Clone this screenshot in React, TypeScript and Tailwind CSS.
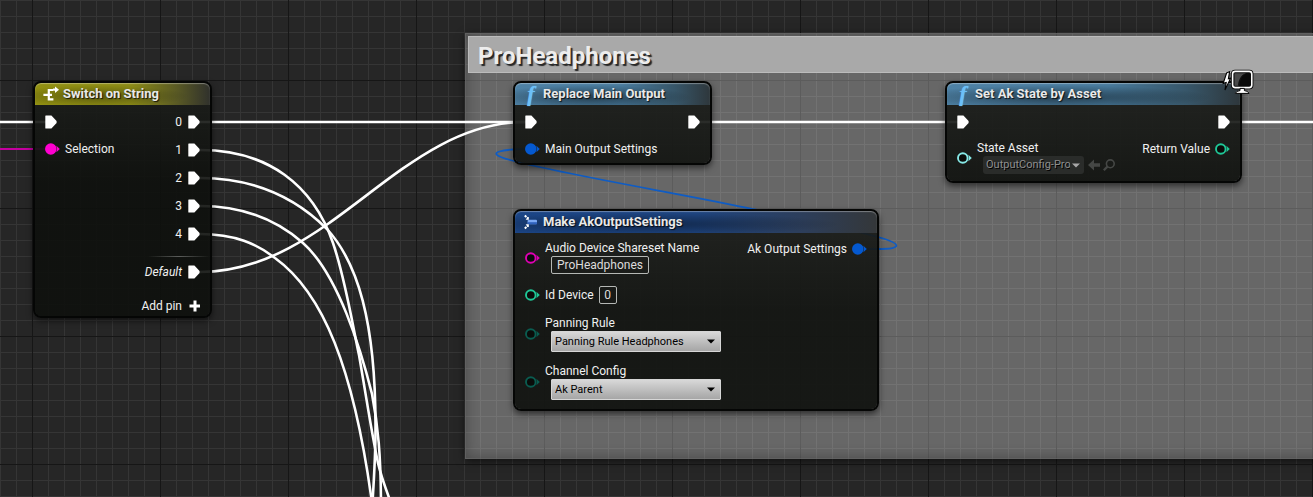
import React from "react";

const WHITE_WIRES = [
  "M-4 122 H50",
  "M200 122 H530",
  "M200 272 C330 272 400 122 525 122",
  "M200 150 C268 150 313 185 333 243 C345 278 352 322 359 355 C366 395 371 430 378 463 C381 476 385 487 391 503",
  "M200 178 C260 178 300 202 327 229 C357 262 376 320 375.5 430 C375.5 455 374 480 372 510",
  "M200 206 C244 206 277 220 303 243 C338 274 361 350 372 394 C378 425 381 455 381 510",
  "M200 234 C235 234 257 244 275 258 C322 292 354 365 373 510",
  "M694 122 H962",
  "M1224 122 H4000",
];

function Wires() {
  return (
    <svg className="pointer-events-none absolute inset-0 h-full w-full" fill="none" aria-hidden="true">
      <path d="M-4 149 H50" stroke="#c4009f" strokeWidth="2" />
      <path
        d="M531 149 C505 149 480 152 510 160 C560 174 700 197 752 209 C810 221 850 229 878 237 C903 244 902 249 878 249 H858"
        stroke="#0f5cc4"
        strokeWidth="1.8"
      />
      {WHITE_WIRES.map((d) => (
        <path key={d} d={d} stroke="#ffffff" strokeWidth="2.6" />
      ))}
    </svg>
  );
}

function ExecPin() {
  return (
    <svg width="12" height="14" viewBox="0 0 12 14" className="shrink-0" aria-hidden="true">
      <path d="M0.8 0.5 H6.4 L11.6 6 V8 L6.4 13.5 H0.8 Q0.3 13.5 0.3 13 V1 Q0.3 0.5 0.8 0.5Z" fill="#fff" />
    </svg>
  );
}

function DataPin({ color, filled = false }: { color: string; filled?: boolean }) {
  return (
    <svg width="15" height="12" viewBox="0 0 15 12" className="shrink-0" aria-hidden="true">
      <circle cx="5.8" cy="6" r="4.8" fill={filled ? color : "#0a0c0a"} stroke={color} strokeWidth="1.9" />
      <path d="M11.4 2.8 L14.8 6 L11.4 9.2 Q12.4 6 11.4 2.8Z" fill={color} />
    </svg>
  );
}

function FunctionIcon() {
  return (
    <span
      className="flex w-4 justify-center font-['Liberation_Serif',serif] text-[22px] leading-5 font-bold text-[#6cc0f8] italic [text-shadow:0_0_1px_#6cc0f8]"
      aria-hidden="true"
    >
      f
    </span>
  );
}

function SwitchIcon() {
  return (
    <svg width="16" height="16" viewBox="0 0 16 16" fill="none" stroke="#fff" strokeWidth="2.2" aria-hidden="true">
      <path d="M10 4 H5.8 V13.4 H10.4 M0.4 8.8 H9" />
      <path d="M10 3.6 H13" />
      <path d="M12 0.4 L16 3.7 L12 7Z" fill="#fff" stroke="none" />
    </svg>
  );
}

function MakeIcon() {
  return (
    <svg width="16" height="16" viewBox="0 0 16 16" aria-hidden="true">
      <rect x="4.6" y="5.8" width="9.4" height="4.4" rx="1" fill="#7aa8f4" />
      <rect x="4.6" y="8.2" width="9.4" height="2" fill="#2f62bd" />
      <path d="M1.8 1.4 L5 4.4 M1.8 14.6 L5 11.6" stroke="#fff" strokeWidth="2" strokeDasharray="2.2 0.8" />
      <path d="M2.6 5.8 H5.8 V2.8Z M2.6 10.2 H5.8 V13.2Z" fill="#fff" />
    </svg>
  );
}

function ClientBadge() {
  return (
    <svg width="32" height="28" viewBox="0 0 32 28" className="absolute -top-[14px] -right-[14px]" role="img" aria-label="Client only">
      <path d="M4.6 4 L7.6 2.6 L6.4 9.8 L8.6 9.2 L3 21 L4.2 13.6 L1.2 14.4Z" fill="#fff" stroke="#000" strokeWidth="1.1" />
      <rect x="9" y="0.8" width="22.4" height="19.4" rx="4" fill="#000" />
      <rect x="10.6" y="2.4" width="19.2" height="16.2" rx="2.6" fill="#0a0a0a" stroke="#fff" strokeWidth="1.6" />
      <path d="M12.5 4.3 H24 C19 6.5 17.6 11 17 16.8 H12.5Z" fill="#4a4a4a" />
      <path d="M24 4.3 C19.5 7 18 12 17.4 16.8 H16 C16.6 11 18.5 6 24 4.3Z" fill="#111" />
      <path d="M18 19.4 H22.4 V21.6 Q26 21.8 27 24.4 H13.4 Q14.4 21.8 18 21.6Z" fill="#fff" stroke="#000" strokeWidth="1" />
    </svg>
  );
}

const HEADER_TINTS = {
  olive:
    "bg-[radial-gradient(ellipse_at_35%_60%,rgba(0,0,0,0.36),transparent_58%),linear-gradient(to_right,#929011_0%,#8b8a16_55%,#5c5c24_80%,#30312c_100%)]",
  steel:
    "bg-[radial-gradient(ellipse_at_38%_65%,rgba(0,0,0,0.5),transparent_60%),linear-gradient(to_right,#4e82a6_0%,#487a9c_55%,#375669_82%,#2e373c_100%)]",
  navy:
    "bg-[radial-gradient(ellipse_at_35%_60%,rgba(0,0,0,0.42),transparent_60%),linear-gradient(to_right,#1b4586_0%,#1e447f_50%,#2d3e5a_80%,#343739_100%)]",
};

function Node({
  title,
  tint,
  icon,
  className,
  badge,
  children,
}: {
  title: string;
  tint: keyof typeof HEADER_TINTS;
  icon: React.ReactNode;
  className: string;
  badge?: React.ReactNode;
  children: React.ReactNode;
}) {
  return (
    <section
      className={`absolute rounded-lg border-2 border-[#050605] bg-[linear-gradient(to_bottom,rgba(28,30,27,0.92),rgba(14,16,13,0.91)_100px)] bg-clip-padding shadow-[0_3px_6px_rgba(0,0,0,0.55)] ${className}`}
    >
      <header
        className={`flex h-[22px] items-center gap-1 rounded-t-md pl-2 shadow-[inset_0_1px_1px_rgba(255,255,255,0.35)] ${HEADER_TINTS[tint]}`}
      >
        {icon}
        <h2 className="text-[13px] leading-4 font-bold whitespace-nowrap text-[#e9e9e9] [text-shadow:1px_1px_1px_rgba(0,0,0,0.8)]">{title}</h2>
      </header>
      {badge}
      {children}
    </section>
  );
}

function Exec({ out = false }: { out?: boolean }) {
  return (
    <div className={`flex h-[27px] items-center ${out ? "justify-end" : ""}`}>
      <ExecPin />
    </div>
  );
}

function ExecOut({ label, italic = false }: { label: string; italic?: boolean }) {
  return (
    <div className={`flex h-7 items-center justify-end gap-[6px] ${italic ? "italic" : ""}`}>
      {label}
      <ExecPin />
    </div>
  );
}

function LabeledPin({ color, label, id, children }: { color: string; label: string; id: string; children: React.ReactNode }) {
  return (
    <div className="flex items-center gap-[5px]">
      <DataPin color={color} />
      <div>
        <label htmlFor={id} className="block leading-[15px] whitespace-nowrap">
          {label}
        </label>
        <div className="flex pl-[6px]">{children}</div>
      </div>
    </div>
  );
}

function EnumSelect({ id, options }: { id: string; options: string[] }) {
  return (
    <div className="relative">
      <select
        id={id}
        className="block h-[21px] w-[170px] appearance-none rounded-[1px] border border-[#d6d6d6] bg-linear-to-b from-[#d8d8d8] to-[#a6a6a6] pl-[3px] text-[11px] leading-4 text-black"
      >
        {options.map((o) => (
          <option key={o}>{o}</option>
        ))}
      </select>
      <svg width="8" height="5" viewBox="0 0 8 5" className="pointer-events-none absolute top-2 right-[6px]" aria-hidden="true">
        <path d="M0 0.5 H8 L4 4.5Z" fill="#000" />
      </svg>
    </div>
  );
}

const fieldClass =
  "h-[18px] rounded-[2px] border border-[#b5b8b5] bg-transparent text-[12px] leading-4 text-[#dcdcdc]";

export default function App() {
  return (
    <main className="relative min-h-screen w-full overflow-hidden bg-[#262626] bg-[linear-gradient(to_right,#161616_1px,transparent_1px),linear-gradient(to_bottom,#161616_1px,transparent_1px),linear-gradient(to_right,#353535_1px,transparent_1px),linear-gradient(to_bottom,#353535_1px,transparent_1px)] bg-[length:128px_128px,128px_128px,16px_16px,16px_16px] bg-[position:32px_80px,32px_80px,0_0,0_0] font-['Roboto',sans-serif] text-[12px] leading-4 text-[#f0f0f0]">
      <section className="absolute top-[33px] -right-5 left-[465px] h-[426px] border border-[#5c5c5c]/60 bg-white/30 p-[2px] shadow-[inset_0_0_14px_rgba(0,0,0,0.3),0_2px_8px_rgba(0,0,0,0.6)]">
        <h1 className="border border-[#bcbcbc] bg-[#a9a9a9] pt-[3px] pl-[9px] text-[24px] leading-8 font-bold text-[#ededed] [text-shadow:2px_2px_1px_#262626]">
          ProHeadphones
        </h1>
      </section>

      <Wires />

      <Node title="Switch on String" tint="olive" icon={<SwitchIcon />} className="top-[81px] left-[33px] w-[179px]">
        <div className="flex justify-between px-2.5 pt-[3px]">
          <div>
            <Exec />
            <div className="flex h-[27px] items-center gap-[5px]">
              <DataPin color="#ff00d0" filled />
              Selection
            </div>
          </div>
          <div>
            {["0", "1", "2", "3", "4"].map((n) => (
              <ExecOut key={n} label={n} />
            ))}
          </div>
        </div>
        <div className="mt-2 mb-px ml-auto h-px w-[62px] bg-linear-to-r from-transparent via-[#5c5e5c] to-transparent" />
        <div className="px-2.5">
          <ExecOut label="Default" italic />
          <button type="button" className="mt-2.5 ml-auto flex h-5 items-center gap-[6px]">
            Add pin
            <svg width="12" height="12" viewBox="0 0 12 12" aria-hidden="true">
              <path d="M7 0.5 V11.5 M1.5 6 H12" stroke="#fff" strokeWidth="3" />
            </svg>
          </button>
        </div>
      </Node>

      <Node title="Replace Main Output" tint="steel" icon={<FunctionIcon />} className="top-[81px] left-[513px] w-[199px]">
        <div className="flex justify-between px-2.5 pt-[3px] pb-px">
          <div>
            <Exec />
            <div className="flex h-[27px] items-center gap-[5px] whitespace-nowrap">
              <DataPin color="#0559d0" filled />
              Main Output Settings
            </div>
          </div>
          <Exec out />
        </div>
      </Node>

      <Node
        title="Set Ak State by Asset"
        tint="steel"
        icon={<FunctionIcon />}
        className="top-[81px] left-[945px] w-[297px]"
        badge={<ClientBadge />}
      >
        <div className="flex justify-between px-2.5 pt-[3px] pb-[7px]">
          <div>
            <Exec />
            <div className="pt-[6px]">
              <LabeledPin color="#86e8e6" label="State Asset" id="state-asset">
                <button
                  id="state-asset"
                  type="button"
                  className="flex h-[18px] w-[101px] items-center gap-[2px] rounded-[3px] bg-[#2a2c2a] pr-1 pl-[3px] text-[11px] text-[#8e8e8e] [text-shadow:1px_1px_0_#000]"
                >
                  <span className="min-w-0 flex-1 overflow-hidden text-left whitespace-nowrap">OutputConfig-Pro</span>
                  <svg width="8" height="5" viewBox="0 0 8 5" className="shrink-0" aria-hidden="true">
                    <path d="M0 0.5 H8 L4 4.5Z" fill="#a8a8a8" />
                  </svg>
                </button>
                <button type="button" aria-label="Use selected asset" className="ml-1 flex items-center">
                  <svg width="12" height="12" viewBox="0 0 12 12" aria-hidden="true">
                    <path d="M0 6 L6 0.5 V4.2 H12 V7.8 H6 V11.5Z" fill="#454745" />
                  </svg>
                </button>
                <button type="button" aria-label="Browse to asset" className="ml-[3px] flex items-center">
                  <svg width="12" height="12" viewBox="0 0 12 12" fill="none" stroke="#454745" aria-hidden="true">
                    <circle cx="7.3" cy="4.8" r="3.9" strokeWidth="1.6" />
                    <path d="M4.4 7.6 L0.8 11.2" strokeWidth="2.2" />
                  </svg>
                </button>
              </LabeledPin>
            </div>
          </div>
          <div>
            <Exec out />
            <div className="flex h-[27px] items-center justify-end gap-[5px] whitespace-nowrap">
              Return Value
              <DataPin color="#1fc797" />
            </div>
          </div>
        </div>
      </Node>

      <Node title="Make AkOutputSettings" tint="navy" icon={<MakeIcon />} className="top-[209px] left-[513px] w-[366px]">
        <div className="flex justify-between px-2.5 pt-2 pb-[9px]">
          <div className="flex flex-col gap-3">
            <LabeledPin color="#e000b4" label="Audio Device Shareset Name" id="shareset">
              <input id="shareset" defaultValue="ProHeadphones" className={`w-[98px] px-[5px] ${fieldClass}`} />
            </LabeledPin>
            <div className="flex items-center gap-[5px]">
              <DataPin color="#1fc797" />
              <label htmlFor="id-device">Id Device</label>
              <input id="id-device" defaultValue="0" className={`w-[18px] text-center ${fieldClass}`} />
            </div>
            <LabeledPin color="#0a5c50" label="Panning Rule" id="panning-rule">
              <EnumSelect id="panning-rule" options={["Panning Rule Headphones", "Panning Rule Speakers"]} />
            </LabeledPin>
            <LabeledPin color="#0a5c50" label="Channel Config" id="channel-config">
              <EnumSelect id="channel-config" options={["Ak Parent", "Ak Main Mix"]} />
            </LabeledPin>
          </div>
          <div className="flex h-4 items-center gap-[5px] whitespace-nowrap">
            Ak Output Settings
            <DataPin color="#0559d0" filled />
          </div>
        </div>
      </Node>
    </main>
  );
}
